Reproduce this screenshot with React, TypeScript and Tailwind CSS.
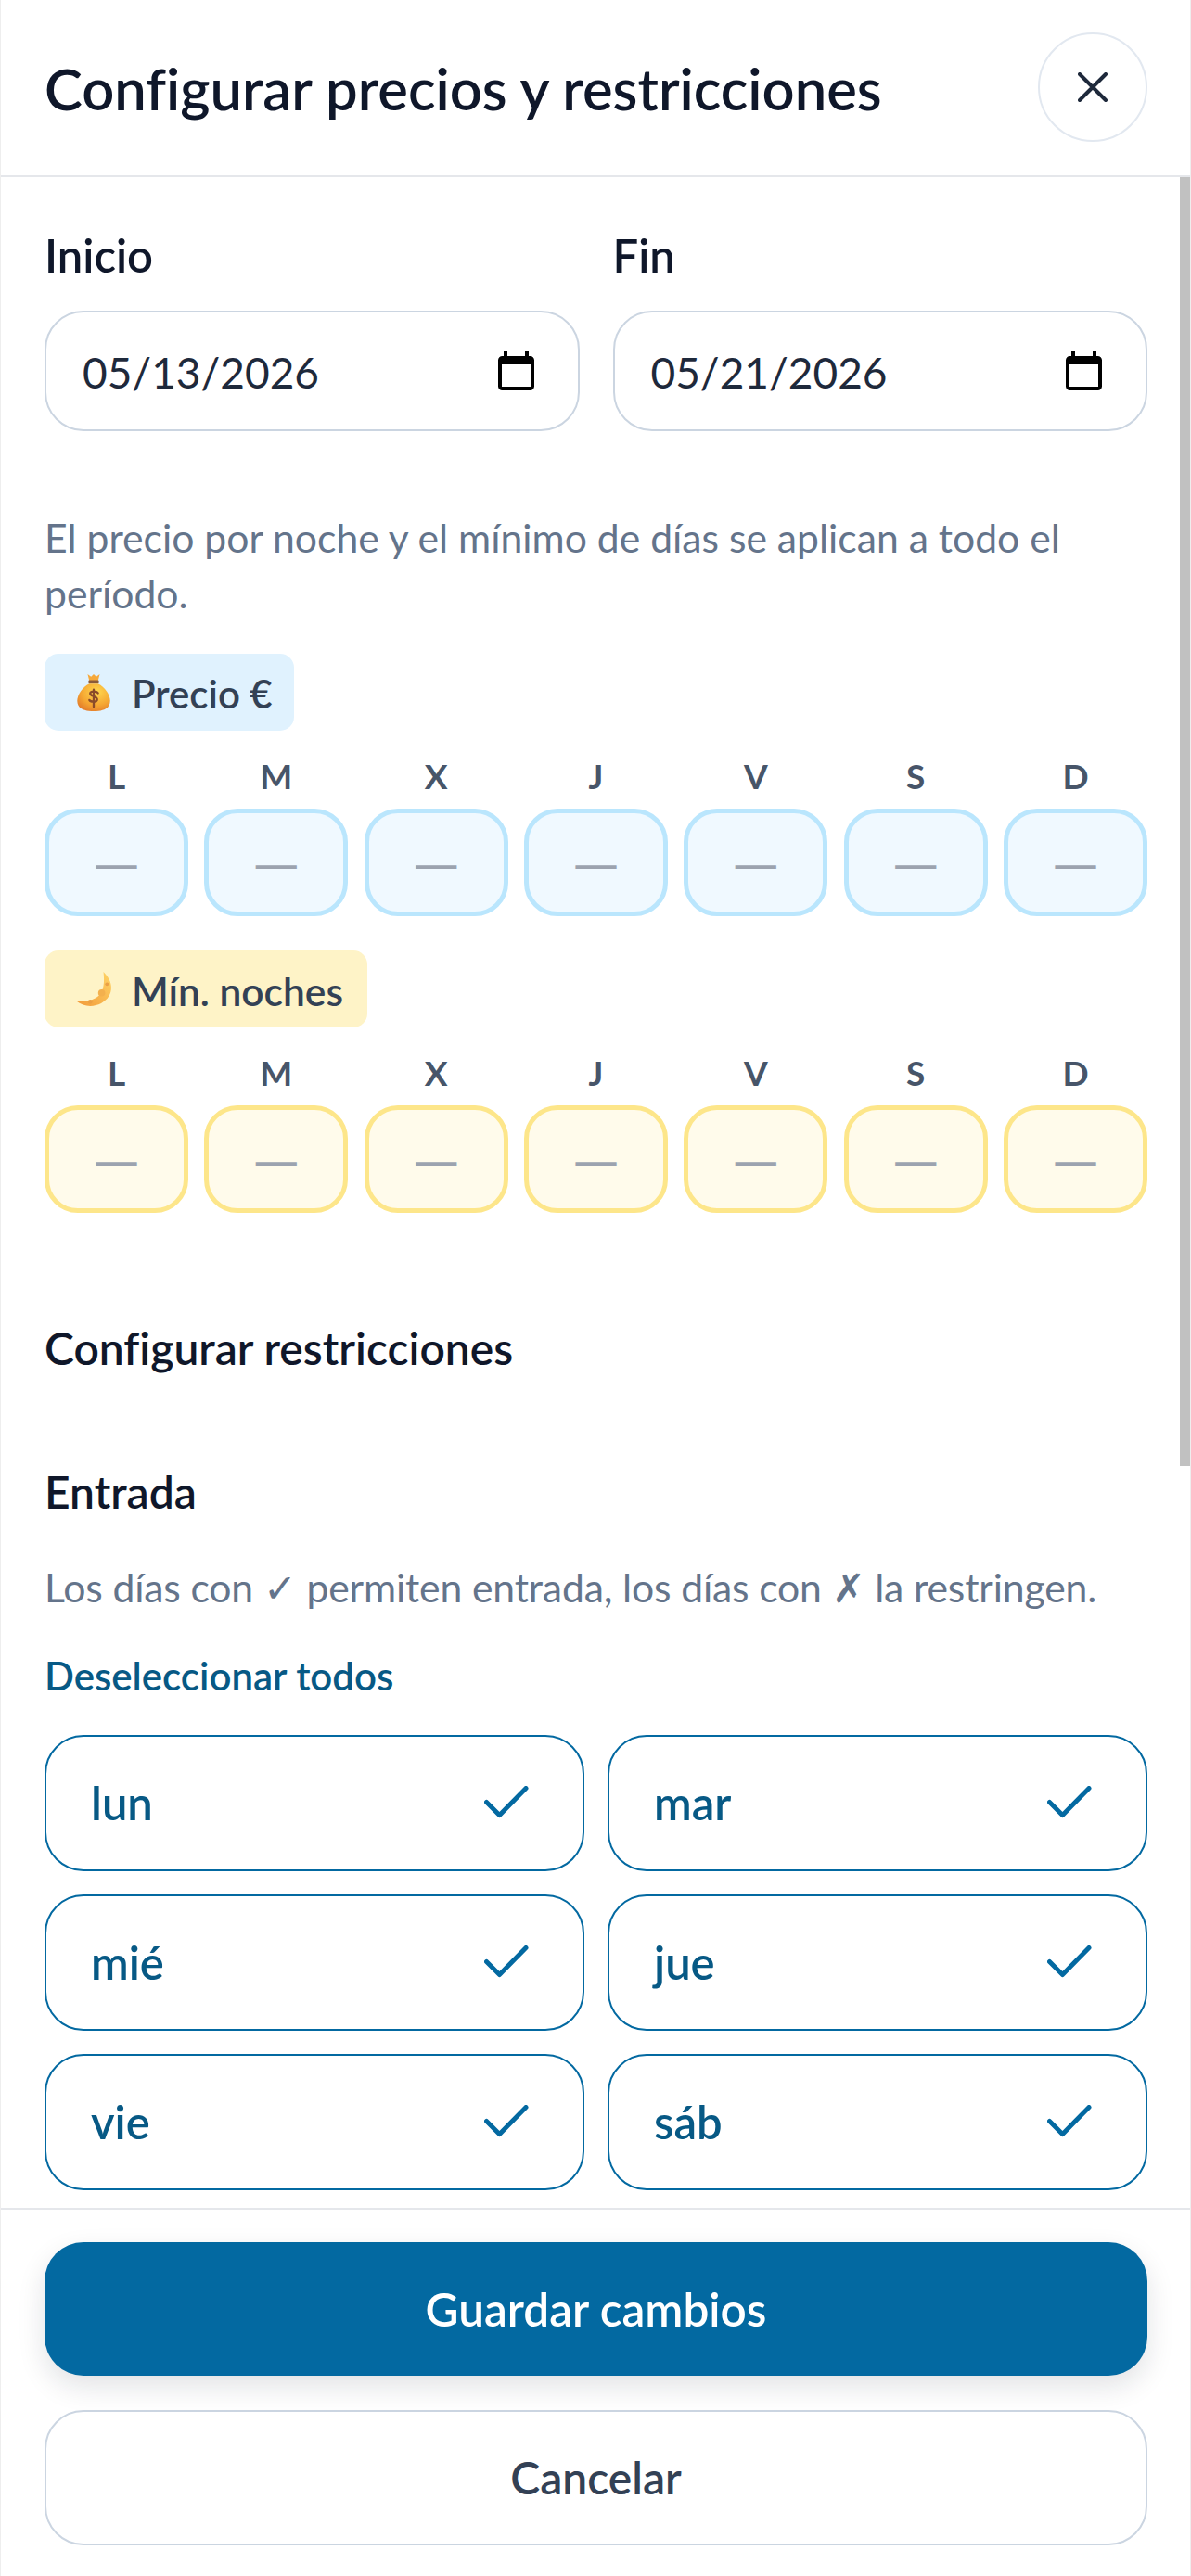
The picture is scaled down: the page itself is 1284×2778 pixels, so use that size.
const F = "font-['Lato',sans-serif] [font-variant-ligatures:none]";
const days = ["L", "M", "X", "J", "V", "S", "D"];
const restr = ["lun", "mar", "mié", "jue", "vie", "sáb"];

function Bag() {
  return (
    <svg width="36" height="41" viewBox="0 0 38 44" className="shrink-0">
      <defs>
        <radialGradient id="bag" cx="0.6" cy="0.3" r="0.8">
          <stop offset="0" stopColor="#ffd84f" />
          <stop offset="0.6" stopColor="#f5a632" />
          <stop offset="1" stopColor="#e0762a" />
        </radialGradient>
      </defs>
      <path d="M12 1l4 3 3-3 3 3 4-3-2 8H14z" fill="#f6a93b" />
      <rect x="13" y="8" width="12" height="4" rx="1" fill="#8a5a3a" />
      <path d="M14 12h10c8 4 14 13 14 20 0 9-8 12-19 12S0 41 0 32c0-7 6-16 14-20z" fill="url(#bag)" />
      <path d="M24 23c-1-2-8-3-9 0-1 4 9 3 8 8-1 3-8 2-9 0M19 19v20" stroke="#8a4b2a" strokeWidth="2.500" fill="none" strokeLinecap="round" />
    </svg>
  );
}

function Moon() {
  return (
    <svg width="40" height="38" viewBox="0 0 42 40" className="shrink-0">
      <defs>
        <linearGradient id="moon" x1="1" y1="0" x2="0" y2="1">
          <stop offset="0" stopColor="#ffd567" />
          <stop offset="1" stopColor="#f29a3a" />
        </linearGradient>
      </defs>
      <path d="M31 0c8 8 12 18 6 28-6 10-24 16-37 5 12 2 24-1 29-10 3-7 3-15 2-23z" fill="url(#moon)" />
      <circle cx="29" cy="24" r="4" fill="#f3b04e" />
      <circle cx="35" cy="14" r="2" fill="#eba045" />
      <circle cx="16" cy="34" r="2.500" fill="#eba045" />
    </svg>
  );
}

function Calendar() {
  return (
    <svg width="39" height="42" viewBox="0 0 39 42" className="shrink-0">
      <path d="M6 0h4v5h19V0h4v5h1.500A4.500 4.500 0 0 1 39 9.500V37.500A4.500 4.500 0 0 1 34.500 42H4.500A4.500 4.500 0 0 1 0 37.500V9.500A4.500 4.500 0 0 1 4.500 5H6z" fill="#000" />
      <rect x="4" y="14" width="31" height="24" fill="#fff" />
    </svg>
  );
}

function Check() {
  return (
    <svg width="48" height="36" viewBox="0 0 48 36" fill="none" className="shrink-0 -mt-[2px]">
      <path d="M2.500 17.500L16.500 31.500L45 2.500" stroke="#0369a1" strokeWidth="5" strokeLinecap="round" strokeLinejoin="round" />
    </svg>
  );
}

function DateField({ label, value }: { label: string; value: string }) {
  return (
    <div className="flex-1">
      <div className="text-[49px] leading-[68px] font-semibold text-[#0f172a]">{label}</div>
      <div className="mt-[26px] h-[130px] rounded-[42px] border-2 border-[#cbd5e1] flex items-center justify-between pl-[39px] pr-[47px]">
        <span className="text-[46px] pt-[2px] text-[#1e293b]">{value}</span>
        <Calendar />
      </div>
    </div>
  );
}

function DayGrid({ cell }: { cell: string }) {
  return (
    <>
      <div className="mt-[22px] flex gap-[17.33px]">
        {days.map((d, i) => (
          <div key={i} className="flex-1 text-center text-[37px] leading-[54px] font-bold text-[#475569]">{d}</div>
        ))}
      </div>
      <div className="mt-[8px] flex gap-[17.33px]">
        {days.map((d, i) => (
          <div key={i} className={`flex-1 h-[116px] rounded-[36px] border-[5px] flex items-center justify-center font-['Noto_Sans',sans-serif] text-[48px] text-[#9ca3af] ${cell}`}>—</div>
        ))}
      </div>
    </>
  );
}

export default function App() {
  return (
    <div className={`${F} w-[1284px] h-[2778px] flex flex-col bg-white border-x border-[#eeeeee] overflow-hidden`}>
      <header className="h-[191px] shrink-0 border-b-2 border-[#e5e7eb] flex items-center justify-between pl-[47px] pr-[46px]">
        <h1 className="text-[61.500px] leading-[90px] font-semibold text-[#0f172a]">Configurar precios y restricciones</h1>
        <button className="w-[118px] h-[118px] -mt-[2px] rounded-full border-2 border-[#e2e8f0] flex items-center justify-center">
          <svg width="32" height="32" viewBox="0 0 32 32" fill="none">
            <path d="M2 2l28 28M30 2L2 30" stroke="#1e293b" strokeWidth="4" strokeLinecap="round" />
          </svg>
        </button>
      </header>
      <main className="relative flex-1 min-h-0 overflow-hidden pl-[47px] pr-[46px] pt-[50px]">
        <div className="absolute right-0 top-0 w-[11px] h-[1390px] bg-[#c1c1c1]" />
        <div className="flex gap-[36px]">
          <DateField label="Inicio" value="05/13/2026" />
          <DateField label="Fin" value="05/21/2026" />
        </div>
        <p className="mt-[85px] text-[42.700px] leading-[60px] text-[#64748b]">El precio por noche y el mínimo de días se aplican a todo el período.</p>
        <div className="mt-[35px] flex">
          <div className="flex h-[83px] items-center gap-[23px] rounded-[15px] bg-[#e0f2fe] pl-[35px] pr-[23px] text-[42px] font-semibold text-[#334155]">
            <Bag />
            <span className="pt-[4px]">Precio €</span>
          </div>
        </div>
        <DayGrid cell="bg-[#f0f9ff] border-[#bae6fd]" />
        <div className="mt-[37px] flex">
          <div className="flex h-[83px] items-center gap-[20px] rounded-[15px] bg-[#fef3c7] pl-[34px] pr-[26px] text-[42.500px] font-semibold text-[#334155]">
            <Moon />
            <span className="pt-[4px]">Mín. noches</span>
          </div>
        </div>
        <DayGrid cell="bg-[#fffbeb] border-[#fde68a]" />
        <h2 className="mt-[110px] text-[48px] leading-[72px] font-semibold text-[#0f172a]">Configurar restricciones</h2>
        <h3 className="mt-[83px] text-[48px] leading-[72px] font-semibold text-[#0f172a]">Entrada</h3>
        <p className="mt-[37px] text-[42.700px] leading-[60px] text-[#64748b] whitespace-nowrap tracking-[-0.15px]">
          Los días con <span className="font-['DejaVu_Sans'] font-extralight">✓</span> permiten entrada, los días con <span className="font-['DejaVu_Sans'] font-extralight">✗</span> la restringen.
        </p>
        <div className="mt-[34px] text-[42px] leading-[60px] font-semibold text-[#075985]">Deseleccionar todos</div>
        <div className="mt-[34px] grid grid-cols-2 gap-x-[25px] gap-y-[25px]">
          {restr.map((r) => (
            <div key={r} className="h-[147px] rounded-[42px] border-2 border-[#0369a1] flex items-center justify-between pl-[48px] pr-[58px]">
              <span className="text-[49px] font-semibold text-[#075985]">{r}</span>
              <Check />
            </div>
          ))}
        </div>
      </main>
      <footer className="h-[397px] shrink-0 border-t-2 border-[#e5e7eb] pl-[47px] pr-[46px] pt-[35px]">
        <button className="w-full h-[144px] rounded-[42px] bg-[#0369a1] text-[49.500px] font-semibold text-white shadow-[0_12px_30px_rgba(15,23,42,0.12)]">Guardar cambios</button>
        <button className="mt-[37px] w-full h-[146px] rounded-[42px] border-2 border-[#cbd5e1] bg-white text-[48px] font-semibold text-[#334155]">Cancelar</button>
      </footer>
    </div>
  );
}
